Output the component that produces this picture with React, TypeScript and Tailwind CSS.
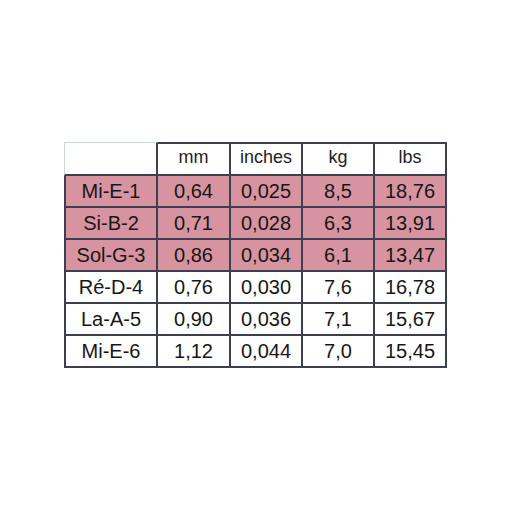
import React from "react";

const header = ["", "mm", "inches", "kg", "lbs"];
const rows: { cells: string[]; pink: boolean }[] = [
  { cells: ["Mi-E-1", "0,64", "0,025", "8,5", "18,76"], pink: true },
  { cells: ["Si-B-2", "0,71", "0,028", "6,3", "13,91"], pink: true },
  { cells: ["Sol-G-3", "0,86", "0,034", "6,1", "13,47"], pink: true },
  { cells: ["Ré-D-4", "0,76", "0,030", "7,6", "16,78"], pink: false },
  { cells: ["La-A-5", "0,90", "0,036", "7,1", "15,67"], pink: false },
  { cells: ["Mi-E-6", "1,12", "0,044", "7,0", "15,45"], pink: false },
];

export default function App() {
  return (
    <div
      className="w-[512px] h-[512px] bg-white pt-[142px] pl-[64px]"
      style={{ fontFamily: '"Liberation Sans", Arial, sans-serif' }}
    >
      <div className="grid grid-cols-[94px_73px_72px_72px_72px] grid-rows-[34px_repeat(6,32px)] w-[383px]">
        {header.map((h, i) =>
          i === 0 ? (
            <div
              key={i}
              className="border-t border-l border-[#cdd5df] border-r-2 border-r-[#3b3f4e] border-b-2 border-b-[#3b3f4e] bg-white"
            />
          ) : (
            <div
              key={i}
              className="border-t-2 border-r-2 border-b-2 border-[#3b3f4e] bg-white flex items-center justify-center text-[18px] text-[#222] pb-[3px]"
            >
              {h}
            </div>
          )
        )}
        {rows.map((r, ri) =>
          r.cells.map((c, ci) => (
            <div
              key={ri + "-" + ci}
              className={
                "border-r-2 border-b-2 border-[#3b3f4e] flex items-center justify-center text-[20px] text-[#161616] " +
                (ci === 0 ? "border-l-2 " : "") +
                (r.pink ? "bg-[#d893a0]" : "bg-white")
              }
            >
              {c}
            </div>
          ))
        )}
      </div>
    </div>
  );
}
